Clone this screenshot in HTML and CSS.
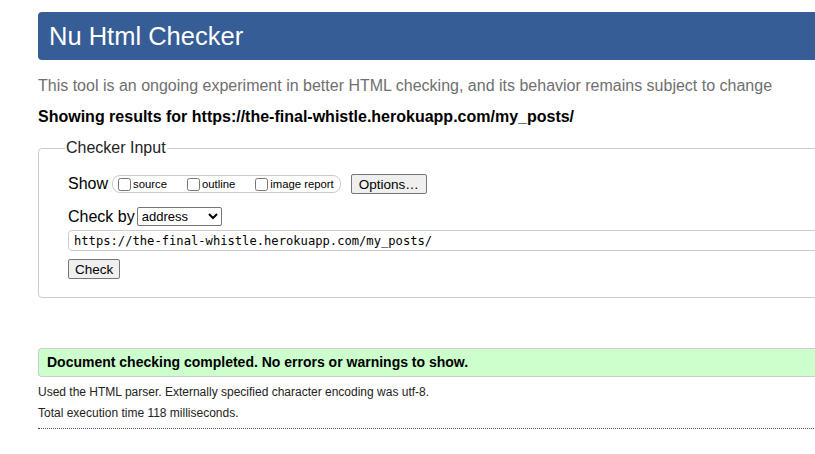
FILE: index.html
```html
<!DOCTYPE html>
<html lang="en">
<head>
<meta charset="utf-8">
<title>Nu Html Checker</title>
<link rel="stylesheet" href="styles.css">
</head>
<body>
<div class="page">
  <h1 class="title">Nu Html Checker</h1>
  <p class="intro">This tool is an ongoing experiment in better HTML checking, and its behavior remains subject to change</p>
  <p class="showing">Showing results for https://the-final-whistle.herokuapp.com/my_posts/</p>
  <fieldset class="input-box">
    <legend>Checker Input</legend>
    <div class="row show-row">
      <span class="lbl">Show</span>
      <span class="opts">
        <label><input type="checkbox">source</label>
        <label><input type="checkbox">outline</label>
        <label><input type="checkbox">image report</label>
      </span>
      <button class="btn">Options…</button>
    </div>
    <div class="row by-row">
      <span class="lbl">Check by</span>
      <select class="sel"><option>address</option></select>
    </div>
    <input class="url" type="text" value="https://the-final-whistle.herokuapp.com/my_posts/">
    <div class="row"><button class="btn check">Check</button></div>
  </fieldset>
  <p class="success">Document checking completed. No errors or warnings to show.</p>
  <p class="details">Used the HTML parser. Externally specified character encoding was utf-8.</p>
  <p class="details">Total execution time 118 milliseconds.</p>
  <hr class="dots">
</div>
</body>
</html>
```

FILE: styles.css
```css
html { overflow: hidden; }
body {
  margin: 0;
  font-family: "Liberation Sans", Arial, sans-serif;
  color: #000;
  background: #fff;
}
.page {
  width: 900px;
  padding: 12px 0 0 38px;
}
.title {
  margin: 0;
  height: 48px;
  background: #365d95;
  color: #fff;
  font-weight: normal;
  font-size: 25.5px;
  line-height: 48px;
  padding-left: 11px;
  border-radius: 4px 0 0 4px;
}
.intro {
  margin: 16px 0 0;
  font-size: 16px;
  line-height: 20px;
  color: #6f6f6f;
}
.showing {
  margin: 11px 0 0;
  font-size: 16px;
  font-weight: bold;
  line-height: 20px;
}
.input-box {
  margin: 12px 0 0;
  border: 1px solid #ccc;
  border-radius: 4px 0 0 4px;
  padding: 6px 0 18px 29px;
}
.input-box legend {
  font-size: 16px;
  padding: 0 1px;
  margin-left: -3px;
  color: #222;
}
.row { display: flex; align-items: center; }
.lbl { font-size: 16px; }
.show-row { margin-top: 11px; }
.opts {
  display: inline-flex;
  align-items: center;
  margin-left: 4px;
  border: 1px solid #ccc;
  border-radius: 8px;
  height: 16px;
  padding: 0 6px 0 3px;
  font-size: 11.3px;
}
.opts label { display: inline-flex; align-items: center; margin-right: 18px; }
.opts label:last-child { margin-right: 0; }
.opts input { margin: 0 2px 0 2px; width: 13px; height: 13px; }
.btn {
  font-family: "Liberation Sans", Arial, sans-serif;
  font-size: 13.5px;
  padding: 1px 7px;
  height: 20px;
  border: 1px solid #767676;
  border-radius: 2px;
  background: #efefef;
  color: #000;
  margin-left: 10px;
}
.by-row { margin-top: 13px; }
.sel {
  margin-left: 2px;
  font-family: "Liberation Sans", Arial, sans-serif;
  font-size: 13px;
  width: 85px;
  height: 19px;
  border: 1px solid #767676;
  border-radius: 2px;
  background: #fff;
  color: #000;
}
.url {
  display: block;
  margin-top: 4px;
  box-sizing: border-box;
  width: 860px;
  height: 21px;
  border: 1px solid #ccc;
  border-radius: 4px 0 0 4px;
  padding: 0 5px;
  font-family: "DejaVu Sans Mono", monospace;
  font-size: 12.15px;
  color: #000;
}
.check { margin: 8px 0 0 0; padding: 1px 6px; }
.success {
  margin: 50px 0 0;
  height: 29px;
  box-sizing: border-box;
  border: 1px solid #ccc;
  border-right: 0;
  border-radius: 4px 0 0 4px;
  background: #ccffcc;
  font-weight: bold;
  font-size: 14px;
  line-height: 27px;
  padding-left: 8px;
}
.details {
  margin: 8px 0 0;
  font-size: 12px;
  line-height: 14px;
  color: #222;
}
.details + .details { margin-top: 7px; }
.dots {
  margin: 8px 0 0;
  border: 0;
  border-top: 1px dotted #555;
  height: 0;
}
```
